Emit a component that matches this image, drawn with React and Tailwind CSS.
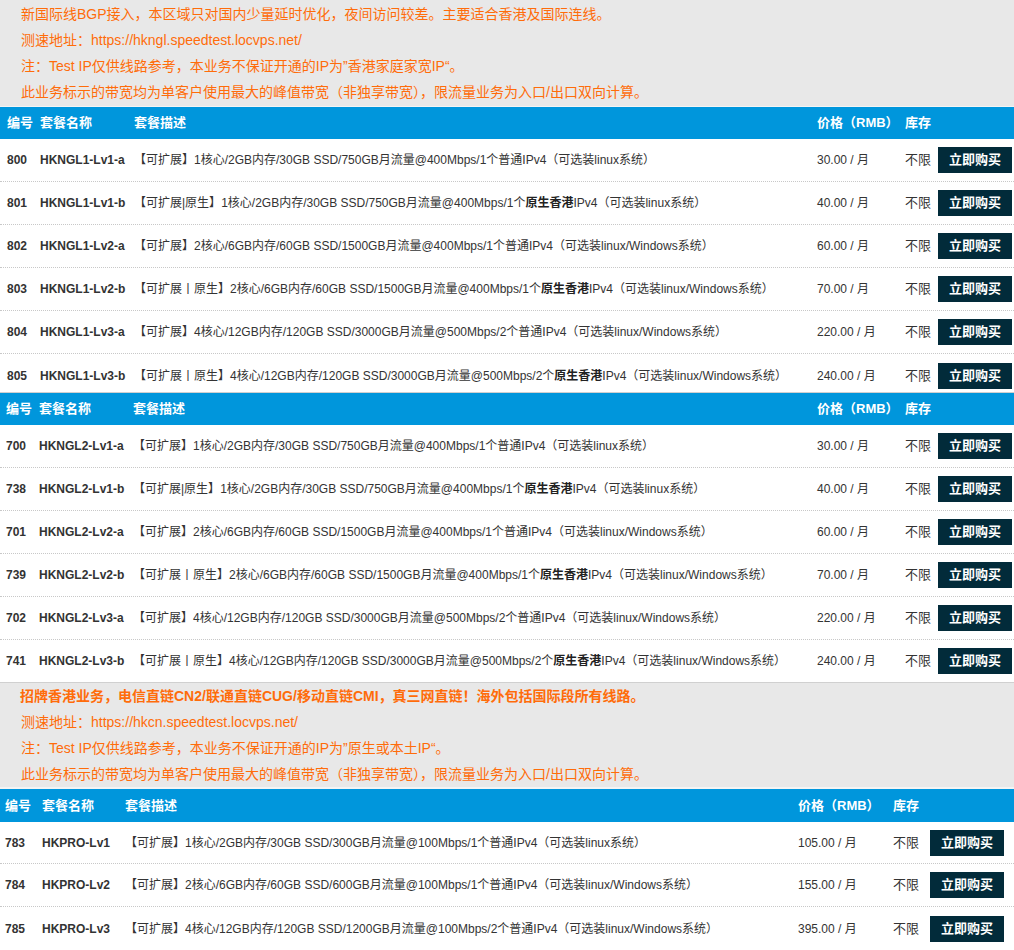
import React from "react";

const FONT = { fontFamily: '"Liberation Sans", "Noto Sans CJK SC", sans-serif' };

const t1 = [
  ["800", "HKNGL1-Lv1-a", "【可扩展】", "1核心/2GB内存/30GB SSD/750GB月流量@400Mbps/1个", null, "普通IPv4（可选装linux系统）", "30.00 / 月"],
  ["801", "HKNGL1-Lv1-b", "【可扩展|原生】", "1核心/2GB内存/30GB SSD/750GB月流量@400Mbps/1个", "原生香港", "IPv4（可选装linux系统）", "40.00 / 月"],
  ["802", "HKNGL1-Lv2-a", "【可扩展】", "2核心/6GB内存/60GB SSD/1500GB月流量@400Mbps/1个", null, "普通IPv4（可选装linux/Windows系统）", "60.00 / 月"],
  ["803", "HKNGL1-Lv2-b", "【可扩展丨原生】", "2核心/6GB内存/60GB SSD/1500GB月流量@400Mbps/1个", "原生香港", "IPv4（可选装linux/Windows系统）", "70.00 / 月"],
  ["804", "HKNGL1-Lv3-a", "【可扩展】", "4核心/12GB内存/120GB SSD/3000GB月流量@500Mbps/2个", null, "普通IPv4（可选装linux/Windows系统）", "220.00 / 月"],
  ["805", "HKNGL1-Lv3-b", "【可扩展丨原生】", "4核心/12GB内存/120GB SSD/3000GB月流量@500Mbps/2个", "原生香港", "IPv4（可选装linux/Windows系统）", "240.00 / 月"],
];

const t2 = [
  ["700", "HKNGL2-Lv1-a", "【可扩展】", "1核心/2GB内存/30GB SSD/750GB月流量@400Mbps/1个", null, "普通IPv4（可选装linux系统）", "30.00 / 月"],
  ["738", "HKNGL2-Lv1-b", "【可扩展|原生】", "1核心/2GB内存/30GB SSD/750GB月流量@400Mbps/1个", "原生香港", "IPv4（可选装linux系统）", "40.00 / 月"],
  ["701", "HKNGL2-Lv2-a", "【可扩展】", "2核心/6GB内存/60GB SSD/1500GB月流量@400Mbps/1个", null, "普通IPv4（可选装linux/Windows系统）", "60.00 / 月"],
  ["739", "HKNGL2-Lv2-b", "【可扩展丨原生】", "2核心/6GB内存/60GB SSD/1500GB月流量@400Mbps/1个", "原生香港", "IPv4（可选装linux/Windows系统）", "70.00 / 月"],
  ["702", "HKNGL2-Lv3-a", "【可扩展】", "4核心/12GB内存/120GB SSD/3000GB月流量@500Mbps/2个", null, "普通IPv4（可选装linux/Windows系统）", "220.00 / 月"],
  ["741", "HKNGL2-Lv3-b", "【可扩展丨原生】", "4核心/12GB内存/120GB SSD/3000GB月流量@500Mbps/2个", "原生香港", "IPv4（可选装linux/Windows系统）", "240.00 / 月"],
];

const t3 = [
  ["783", "HKPRO-Lv1", "【可扩展】", "1核心/2GB内存/30GB SSD/300GB月流量@100Mbps/1个", null, "普通IPv4（可选装linux系统）", "105.00 / 月"],
  ["784", "HKPRO-Lv2", "【可扩展】", "2核心/6GB内存/60GB SSD/600GB月流量@100Mbps/1个", null, "普通IPv4（可选装linux/Windows系统）", "155.00 / 月"],
  ["785", "HKPRO-Lv3", "【可扩展】", "4核心/12GB内存/120GB SSD/1200GB月流量@100Mbps/2个", null, "普通IPv4（可选装linux/Windows系统）", "395.00 / 月"],
];

const layoutA = {
  id: "w-[33px] pl-[7px] box-content",
  name: "w-[94px]",
  desc: "w-[683px]",
  price: "w-[88px]",
  stock: "w-[33px]",
};
const layoutB = {
  id: "w-[33px] pl-[6px] box-content",
  name: "w-[94px]",
  desc: "w-[684px]",
  price: "w-[88px]",
  stock: "w-[33px]",
};
const layoutC = {
  id: "w-[37px] pl-[5px] box-content",
  name: "w-[83px]",
  desc: "w-[673px]",
  price: "w-[95px]",
  stock: "w-[37px]",
};

function Header({ L, h }) {
  return (
    <div className={`flex items-center bg-[#0096dc] text-white font-bold text-[13px] ${h}`}>
      <div className={`${L.id} shrink-0`}>编号</div>
      <div className={`${L.name} shrink-0`}>套餐名称</div>
      <div className={`${L.desc} shrink-0`}>套餐描述</div>
      <div className={`${L.price} shrink-0`}>价格（RMB）</div>
      <div className={`${L.stock} shrink-0`}>库存</div>
    </div>
  );
}

function Row({ L, r, last, size }) {
  const [id, name, tag, spec, bold, rest, price] = r;
  return (
    <div
      className={`flex items-center text-[12px] text-[#333] bg-white ${size} ${
        last ? "" : "border-b border-dotted border-[#c8c8c8]"
      }`}
    >
      <div className={`${L.id} shrink-0 font-bold`}>{id}</div>
      <div className={`${L.name} shrink-0 font-bold`}>{name}</div>
      <div className={`${L.desc} shrink-0 whitespace-nowrap`}>
        {tag}
        {spec}
        {bold && <b className="text-[#222]">{bold}</b>}
        {rest}
      </div>
      <div className={`${L.price} shrink-0`}>{price}</div>
      <div className={`${L.stock} shrink-0 text-[13px]`}>不限</div>
      <div className="w-[74px] h-[26px] shrink-0 bg-[#022b3a] text-white text-[13px] font-bold flex items-center justify-center">
        立即购买
      </div>
    </div>
  );
}

function Notice({ lines, boldFirst, pt }) {
  return (
    <div className={`bg-[#e8e8e8] text-[#ff6c0a] text-[14px] leading-[26px] ${pt}`}>
      {lines.map((l, i) => (
        <div key={i} className={`${boldFirst && i === 0 ? "font-bold pl-[20px]" : "pl-[21px]"} whitespace-nowrap`}>
          {l}
        </div>
      ))}
    </div>
  );
}

export default function App() {
  return (
    <div style={FONT} className="w-[1014px] bg-white">
      <Notice
        pt="pt-[1px] pb-[1px]"
        lines={[
          "新国际线BGP接入，本区域只对国内少量延时优化，夜间访问较差。主要适合香港及国际连线。",
          "测速地址：https://hkngl.speedtest.locvps.net/",
          "注：Test IP仅供线路参考，本业务不保证开通的IP为”香港家庭家宽IP“。",
          "此业务标示的带宽均为单客户使用最大的峰值带宽（非独享带宽），限流量业务为入口/出口双向计算。",
        ]}
      />
      <div className="h-px bg-[#f4f4f4]" />
      <Header L={layoutA} h="h-[32px]" />
      {t1.map((r, i) => (
        <Row
          key={r[0]}
          L={layoutA}
          r={r}
          last={i === t1.length - 1}
          size={i === t1.length - 1 ? "h-[38px] pt-[6px]" : "h-[43px]"}
        />
      ))}
      <div className="h-px bg-[#d0d0d0]" />
      <Header L={layoutB} h="h-[32px]" />
      {t2.map((r, i) => (
        <Row
          key={r[0]}
          L={layoutB}
          r={r}
          last={i === t2.length - 1}
          size={i === t2.length - 1 ? "h-[42px]" : "h-[43px]"}
        />
      ))}
      <div className="h-px bg-[#d0d0d0]" />
      <Notice
        pt="pt-0"
        boldFirst
        lines={[
          "招牌香港业务，电信直链CN2/联通直链CUG/移动直链CMI，真三网直链！海外包括国际段所有线路。",
          "测速地址：https://hkcn.speedtest.locvps.net/",
          "注：Test IP仅供线路参考，本业务不保证开通的IP为”原生或本土IP“。",
          "此业务标示的带宽均为单客户使用最大的峰值带宽（非独享带宽），限流量业务为入口/出口双向计算。",
        ]}
      />
      <div className="h-[2px] bg-[#f4f4f4]" />
      <Header L={layoutC} h="h-[33px]" />
      {t3.map((r, i) => (
        <Row
          key={r[0]}
          L={layoutC}
          r={r}
          last={i === t3.length - 1}
          size={i === 0 ? "h-[42px]" : "h-[43px]"}
        />
      ))}
    </div>
  );
}
